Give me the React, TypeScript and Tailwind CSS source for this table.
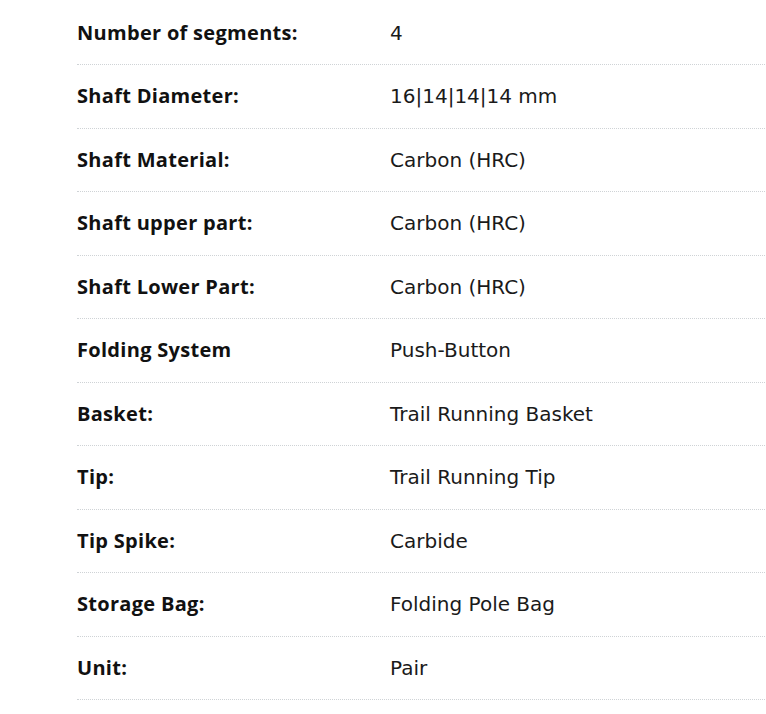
import React from "react";

const specs: [string, string][] = [
  ["Number of segments:", "4"],
  ["Shaft Diameter:", "16|14|14|14 mm"],
  ["Shaft Material:", "Carbon (HRC)"],
  ["Shaft upper part:", "Carbon (HRC)"],
  ["Shaft Lower Part:", "Carbon (HRC)"],
  ["Folding System", "Push-Button"],
  ["Basket:", "Trail Running Basket"],
  ["Tip:", "Trail Running Tip"],
  ["Tip Spike:", "Carbide"],
  ["Storage Bag:", "Folding Pole Bag"],
  ["Unit:", "Pair"],
];

const App: React.FC = () => {
  return (
    <div className="w-[766px] h-[714px] overflow-hidden bg-white pl-[77px] pt-[1.5px] text-[20px] text-[#111]">
      {/* Spec table */}
      <div className="w-[800px]">
        {specs.map(([label, value]) => (
          <div key={label} className="flex h-[63.5px] items-center border-b border-dotted border-[#cfd3d6]">
            <div className="w-[313px] shrink-0 font-['Open_Sans',sans-serif] font-bold tracking-[0.3px]">{label}</div>
            <div className="font-['DejaVu_Sans',sans-serif] text-[#1a1a1a]">{value}</div>
          </div>
        ))}
      </div>
    </div>
  );
};

export default App;
